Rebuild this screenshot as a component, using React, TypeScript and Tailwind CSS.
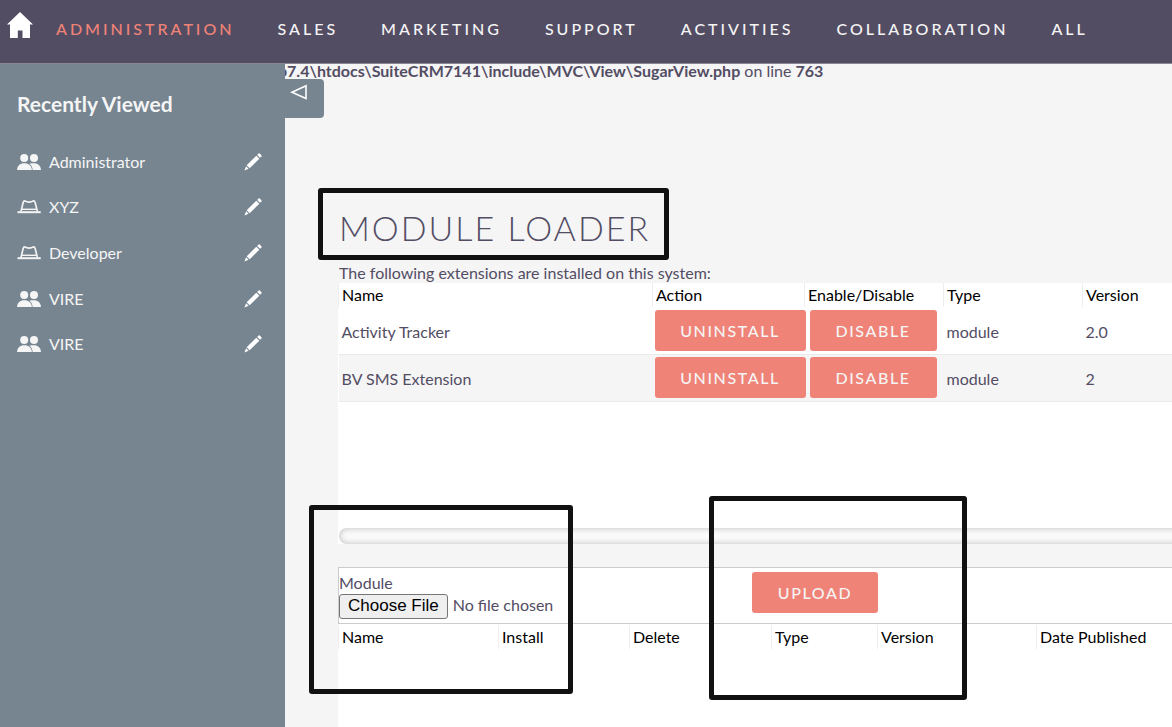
import React from "react";

const NAV = ["Administration", "Sales", "Marketing", "Support", "Activities", "Collaboration", "All"];

const RECENT: { name: string; kind: "group" | "role" }[] = [
  { name: "Administrator", kind: "group" },
  { name: "XYZ", kind: "role" },
  { name: "Developer", kind: "role" },
  { name: "VIRE", kind: "group" },
  { name: "VIRE", kind: "group" },
];

const EXTENSIONS = [
  { name: "Activity Tracker", type: "module", version: "2.0" },
  { name: "BV SMS Extension", type: "module", version: "2" },
];

function HomeIcon() {
  return (
    <svg viewBox="0 0 26 26" className="h-[26px] w-[26px]" fill="#fff" aria-hidden="true">
      <path d="M13 0 L26 12.5 H23 V26 H15.5 V18.5 H10.8 V26 H3 V12.5 H0 Z" />
    </svg>
  );
}

function GroupIcon() {
  return (
    <svg viewBox="0 0 24 16" className="h-4 w-6" fill="#f5f5f5" aria-hidden="true">
      <circle cx="7.2" cy="4" r="4" />
      <circle cx="17" cy="4" r="4" />
      <path d="M0 16 C0.3 11.5 3 9.2 7.3 9.2 C11.6 9.2 14.6 11.5 14.9 16 Z" />
      <path d="M12.4 9.7 C13.8 9.3 15.2 9.2 16.8 9.2 C21 9.2 23.7 11.5 24 16 H15.6 C15.5 13.4 14.6 11.3 12.4 9.7 Z" />
    </svg>
  );
}

function RoleIcon() {
  return (
    <svg viewBox="0 0 24 16" className="h-4 w-6" fill="none" stroke="#f5f5f5" aria-hidden="true">
      <path d="M4 12.4 L6.2 3.4 Q6.6 1.9 7.8 1.9 Q9.8 3.2 12 3.2 Q14.5 3.2 16.4 1.9 Q17.7 1.9 18.1 3.4 L20.4 12.4" strokeWidth="1.7" />
      <path d="M4.8 10.3 H19.6" strokeWidth="1.4" />
      <path d="M0.5 13.2 H23.7" strokeWidth="2" />
    </svg>
  );
}

function PencilIcon() {
  return (
    <svg viewBox="0 0 18 18" className="h-[18px] w-[18px]" fill="#fff" aria-hidden="true">
      <path d="M13.2 2 L14.6 0.6 Q15.2 0.1 15.8 0.6 L17.4 2.2 Q17.9 2.8 17.4 3.4 L16 4.8 Z" />
      <path d="M12.3 2.7 L15.3 5.7 L5.7 15.3 L2.7 12.3 Z" />
      <path d="M2.1 13.3 L4.6 15.8 L0.4 17.6 Z" />
    </svg>
  );
}

const buttonClass =
  "h-[41px] rounded-[3px] bg-[#f08377] pt-px text-base font-medium uppercase leading-5 tracking-widest text-[#f5f5f5]";

function ColumnHead({ children }: { children: React.ReactNode }) {
  return (
    <th scope="col" className="h-6 border-l border-[#eee] p-0 pl-[3px] text-left font-normal text-black">
      {children}
    </th>
  );
}

export default function App() {
  return (
    <div className="relative flex min-h-screen flex-col overflow-hidden bg-[#f5f5f5] font-['Lato',sans-serif] text-base leading-5 text-[#534d64]">
      <header className="flex h-16 items-center border-b border-[#8a8695] bg-[#534d64] pl-[7px]">
        <a href="#home" aria-label="Home" className="-mt-[14px]">
          <HomeIcon />
        </a>
        <nav className="ml-[23px] flex items-center gap-[43px] pb-[6px] font-medium">
          {NAV.map((item, i) => (
            <a
              key={item}
              href="#module"
              className={
                i === 0
                  ? "uppercase tracking-[3px] text-[#f08377]"
                  : "uppercase tracking-[3px] text-[#f5f5f5]"
              }
            >
              {item}
            </a>
          ))}
        </nav>
      </header>

      <div className="flex flex-1">
        <aside className="w-[285px] shrink-0 bg-[#778591] text-[#f5f5f5]">
          <h2 className="pl-[17px] pt-7 text-[21px] font-bold leading-6">Recently Viewed</h2>
          <ul className="mt-[23px] grid h-[228px] grid-rows-5 pl-[17px] pr-[23px]">
            {RECENT.map((r, i) => (
              <li key={i} className="flex items-center">
                {r.kind === "group" ? <GroupIcon /> : <RoleIcon />}
                <a href="#record" className="ml-2 flex-1">
                  {r.name}
                </a>
                <a href="#edit" aria-label={"Edit " + r.name}>
                  <PencilIcon />
                </a>
              </li>
            ))}
          </ul>
        </aside>

        <main className="relative flex min-w-0 flex-1 flex-col overflow-hidden">
          <p className="-ml-[7px] mb-px whitespace-nowrap leading-[14px]">
            <b>p7.4\htdocs\SuiteCRM7141\include\MVC\View\SugarView.php</b> on line <b>763</b>
          </p>
          <button
            aria-label="Collapse sidebar"
            className="flex h-[39px] w-[39px] justify-center rounded-r bg-[#778591] pr-3 pt-[5px]"
          >
            <svg viewBox="0 0 18 16" className="h-4 w-[18px]" fill="none" stroke="#fff" strokeWidth="1.6" aria-hidden="true">
              <path d="M16 1.8 V14.6 L2 8.2 Z" />
            </svg>
          </button>

          <div className="flex flex-1 flex-col pl-[53px]">
            <h1 className="mt-[85px] pl-px text-[34px] font-light uppercase leading-[50px] tracking-[2px]">
              Module Loader
            </h1>
            <p className="mt-[10px] pl-px">The following extensions are installed on this system:</p>

            <section className="h-[261px] bg-white">
              <table className="w-full table-fixed border-collapse">
                <colgroup>
                  <col className="w-[314px]" />
                  <col className="w-[152px]" />
                  <col className="w-[139px]" />
                  <col className="w-[139px]" />
                  <col />
                </colgroup>
                <thead>
                  <tr>
                    <ColumnHead>Name</ColumnHead>
                    <ColumnHead>Action</ColumnHead>
                    <ColumnHead>Enable/Disable</ColumnHead>
                    <ColumnHead>Type</ColumnHead>
                    <ColumnHead>Version</ColumnHead>
                  </tr>
                </thead>
                <tbody>
                  {EXTENSIONS.map((e) => (
                    <tr key={e.name} className="h-[47px] border-b border-[#eaeaea] even:bg-[#f5f5f5]">
                      <td className="p-0 pl-[3px] pt-[3px]">{e.name}</td>
                      <td className="p-0 pl-0.5">
                        <button className={buttonClass + " w-[151px]"}>Uninstall</button>
                      </td>
                      <td className="p-0 pl-[5px]">
                        <button className={buttonClass + " w-[127px]"}>Disable</button>
                      </td>
                      <td className="p-0 pl-[3px] pt-[3px]">{e.type}</td>
                      <td className="p-0 pl-[3px] pt-[3px]">{e.version}</td>
                    </tr>
                  ))}
                </tbody>
              </table>
              <div className="-mr-6 ml-px mt-[126px] h-4 rounded-l-full bg-[#fafafa] shadow-[inset_0_0_6px_rgba(0,0,0,0.25)]" />
            </section>

            <form className="mt-[23px] flex h-[57px] border-y border-l border-[#ccc] bg-white" onSubmit={(e) => e.preventDefault()}>
              <div className="w-[413px] pt-[6px]">
                <label htmlFor="package" className="block leading-[18px]">
                  Module
                </label>
                <input
                  id="package"
                  type="file"
                  className="block w-[300px] leading-[25px] file:mr-[5px] file:h-[25px] file:rounded-[3px] file:border file:border-solid file:border-[#767676] file:bg-[#efefef] file:px-2 file:font-['Liberation_Sans',sans-serif] file:text-[17px] file:leading-5 file:text-black"
                />
              </div>
              <button className={buttonClass + " mt-1 w-[126px]"}>Upload</button>
            </form>

            <div className="flex-1 bg-white pt-px">
              <table className="w-full table-fixed border-collapse">
                <colgroup>
                  <col className="w-[160px]" />
                  <col className="w-[131px]" />
                  <col className="w-[142px]" />
                  <col className="w-[106px]" />
                  <col className="w-[159px]" />
                  <col />
                </colgroup>
                <thead>
                  <tr>
                    <ColumnHead>Name</ColumnHead>
                    <ColumnHead>Install</ColumnHead>
                    <ColumnHead>Delete</ColumnHead>
                    <ColumnHead>Type</ColumnHead>
                    <ColumnHead>Version</ColumnHead>
                    <ColumnHead>Date Published</ColumnHead>
                  </tr>
                </thead>
              </table>
            </div>
          </div>
        </main>
      </div>

      <div className="pointer-events-none absolute left-[318px] top-[188px] h-[72px] w-[351px] rounded-[3px] border-[5px] border-[#111]" />
      <div className="pointer-events-none absolute left-[309px] top-[505px] h-[189px] w-[264px] rounded-[3px] border-[5px] border-[#111]" />
      <div className="pointer-events-none absolute left-[709px] top-[496px] h-[204px] w-[258px] rounded-[3px] border-[5px] border-[#111]" />
    </div>
  );
}
